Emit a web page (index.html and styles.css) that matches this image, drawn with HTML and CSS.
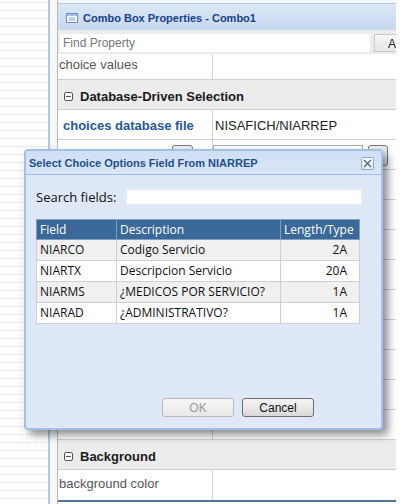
FILE: index.html
```html
<!DOCTYPE html>
<html>
<head>
<meta charset="utf-8">
<link rel="stylesheet" href="styles.css">
</head>
<body>
<div class="page">
  <div class="grid"></div>
  <div class="gutter"></div>
  <div class="panel">
    <div class="topstrip"></div>
    <div class="phead">
      <svg class="picon" width="12" height="10" viewBox="0 0 12 10">
        <rect x="0.5" y="0.5" width="11" height="9" fill="#f4f8fd" stroke="#6f8fbf"/>
        <rect x="1" y="1" width="10" height="2" fill="#a9c1e2"/>
        <line x1="3" y1="5" x2="9" y2="5" stroke="#8aa6cf"/>
        <line x1="3" y1="7" x2="9" y2="7" stroke="#8aa6cf"/>
      </svg>
      <span class="ptitle">Combo Box Properties - Combo1</span>
    </div>
    <div class="findrow">
      <div class="findinput">Find Property</div>
      <div class="findbtn">A</div>
    </div>
    <div class="row first"><div class="lab">choice values</div><div class="val"></div></div>
    <div class="sect"><span class="tog"></span>Database-Driven Selection</div>
    <div class="row"><div class="lab blue">choices database file</div><div class="val">NISAFICH/NIARREP</div></div>
    <div class="row btnrow">
      <div class="lab"><span class="minibtn"></span></div>
      <div class="val"><span class="miniinput"></span><span class="minibtn2"></span></div>
    </div>
    <div class="row"><div class="lab"></div><div class="val"></div></div>
    <div class="row"><div class="lab"></div><div class="val"></div></div>
    <div class="row"><div class="lab"></div><div class="val"></div></div>
    <div class="row"><div class="lab"></div><div class="val"></div></div>
    <div class="row"><div class="lab"></div><div class="val"></div></div>
    <div class="row"><div class="lab"></div><div class="val"></div></div>
    <div class="row"><div class="lab"></div><div class="val"></div></div>
    <div class="row"><div class="lab"></div><div class="val"></div></div>
    <div class="row"><div class="lab"></div><div class="val"></div></div>
    <div class="sect"><span class="tog"></span>Background</div>
    <div class="row last"><div class="lab">background color</div><div class="val"></div></div>
  </div>
  <div class="rest"></div>
</div>

<div class="dialog">
  <div class="dhead">
    <span class="dtitle">Select Choice Options Field From NIARREP</span>
    <span class="dclose">
      <svg width="11" height="11" viewBox="0 0 11 11"><path d="M2 2 L9 9 M9 2 L2 9" stroke="#4d6487" stroke-width="1.3" fill="none"/></svg>
    </span>
  </div>
  <div class="dbody">
    <div class="search">
      <span class="slabel">Search fields:</span>
      <span class="sinput"></span>
    </div>
    <table class="tbl">
      <thead>
        <tr><th class="c1">Field</th><th class="c2">Description</th><th class="c3">Length/Type</th></tr>
      </thead>
      <tbody>
        <tr class="odd"><td>NIARCO</td><td>Codigo Servicio</td><td class="num">2A</td></tr>
        <tr><td>NIARTX</td><td>Descripcion Servicio</td><td class="num">20A</td></tr>
        <tr class="odd"><td>NIARMS</td><td>¿MEDICOS POR SERVICIO?</td><td class="num">1A</td></tr>
        <tr><td>NIARAD</td><td>¿ADMINISTRATIVO?</td><td class="num">1A</td></tr>
      </tbody>
    </table>
    <div class="spacer"></div>
    <div class="dfoot">
      <span class="btn ok">OK</span>
      <span class="btn cancel">Cancel</span>
    </div>
  </div>
</div>
</body>
</html>
```

FILE: styles.css
```css
html, body {
  margin: 0;
  padding: 0;
  background: #fff;
}
body {
  width: 417px;
  height: 504px;
  overflow: hidden;
  position: relative;
  font-family: "Liberation Sans", Arial, sans-serif;
}
.page {
  display: flex;
  height: 504px;
}
.grid {
  width: 48px;
  flex: none;
  background-color: #fff;
  background-image:
    repeating-linear-gradient(0deg, #fff 0 1px, transparent 1px 2px),
    repeating-linear-gradient(90deg, #fff 0 1px, transparent 1px 2px),
    repeating-linear-gradient(90deg, #dedede 0 1px, transparent 1px 8px),
    repeating-linear-gradient(0deg, #dedede 0 1px, transparent 1px 8px);
  background-position: 0 0, 0 0, 4px 3px, 4px 3px;
}
.gutter {
  width: 7px;
  flex: none;
  border-left: 2px solid #b4c8e3;
  background: #f6f7f9;
}
.panel {
  width: 339px;
  flex: none;
  display: flex;
  flex-direction: column;
  border-left: 1px solid #b9b9b9;
  box-sizing: border-box;
  background: #fff;
}
.rest {
  flex: 1;
  background: #fff;
}
.topstrip {
  height: 3px;
  background: #f3f6fb;
  border-bottom: 1px solid #b5c8e3;
}
.phead {
  height: 26px;
  box-sizing: border-box;
  background: linear-gradient(#dde8f6, #c6d7ef);
  display: flex;
  align-items: center;
  padding-left: 8px;
  gap: 5px;
  padding-top: 2px;
}
.ptitle {
  font-weight: bold;
  font-size: 11px;
  color: #15428b;
}
.findrow {
  height: 24px;
  box-sizing: border-box;
  background: #ececec;
  display: flex;
  align-items: flex-start;
  padding: 4px 0 0 2px;
  gap: 4px;
}
.findinput {
  width: 310px;
  height: 18px;
  box-sizing: border-box;
  background: #fff;
  font-size: 12px;
  color: #777;
  padding: 2px 0 0 3px;
}
.findbtn {
  flex: 1;
  height: 18px;
  box-sizing: border-box;
  border: 1px solid #c9c9c9;
  border-right: none;
  background: linear-gradient(#f7f7f7, #e6e6e6);
  font-size: 12px;
  padding: 2px 0 0 13px;
  color: #222;
}
.row {
  height: 30px;
  box-sizing: border-box;
  border-bottom: 1px solid #d0d0d0;
  display: flex;
}
.row.first {
  height: 26px;
}
.row.last {
  height: 32px;
  border-bottom: 2px solid #52749c;
}
.lab {
  width: 155px;
  flex: none;
  border-right: 1px solid #d3d3d3;
  font-size: 13px;
  color: #555;
  padding: 3px 0 0 1px;
  box-sizing: border-box;
  position: relative;
}
.row.first .lab {
  padding-top: 3px;
}
.lab.blue {
  color: #24589a;
  font-weight: bold;
  padding-left: 5px;
  padding-top: 8px;
}
.val {
  flex: 1;
  font-size: 13px;
  color: #222;
  padding: 8px 0 0 2px;
  position: relative;
}
.row.last .lab {
  padding-top: 6px;
}
.sect {
  height: 30px;
  box-sizing: border-box;
  background: #ececec;
  border-bottom: 1px solid #d0d0d0;
  display: flex;
  align-items: center;
  padding: 4px 0 0 6px;
  font-size: 13px;
  font-weight: bold;
  color: #1a1a1a;
  gap: 7px;
}
.tog {
  width: 9px;
  height: 9px;
  box-sizing: border-box;
  border: 1px solid #555;
  border-radius: 2px;
  background: linear-gradient(#555, #555) center / 5px 1px no-repeat, #fff;
}
.btnrow .lab, .btnrow .val {
  padding: 5px 0 0 0;
  display: flex;
}
.minibtn {
  margin-left: 114px;
  width: 21px;
  height: 24px;
  box-sizing: border-box;
  border: 1px solid #777;
  border-radius: 3px;
  background: #eee;
}
.miniinput {
  width: 150px;
  height: 20px;
  box-sizing: border-box;
  border: 1px solid #aaa;
  background: #fff;
}
.minibtn2 {
  margin-left: 5px;
  width: 20px;
  height: 21px;
  box-sizing: border-box;
  border: 1px solid #777;
  border-radius: 3px;
  background: #eee;
}

/* dialog */
.dialog {
  position: absolute;
  left: 24px;
  top: 149px;
  width: 359px;
  height: 281px;
  box-sizing: border-box;
  border: 2px solid #a3c0e8;
  border-radius: 4px;
  background: #dfe8f6;
  box-shadow: 5px 5px 8px rgba(0, 0, 0, 0.45);
  display: flex;
  flex-direction: column;
}
.dhead {
  height: 24px;
  box-sizing: border-box;
  background: linear-gradient(#cfdff4, #dbe6f6);
  border-bottom: 1px solid #9fbde6;
  display: flex;
  align-items: center;
  justify-content: space-between;
  padding: 1px 7px 0 3px;
}
.dtitle {
  font-weight: bold;
  font-size: 11px;
  color: #1d4e8f;
}
.dclose {
  width: 13px;
  height: 13px;
  box-sizing: border-box;
  border: 1px solid #87a9d8;
  border-radius: 2px;
  background: linear-gradient(#fbfdff, #e2ecf8);
  display: flex;
  align-items: center;
  justify-content: center;
}
.dbody {
  flex: 1;
  display: flex;
  flex-direction: column;
  padding: 13px 0 0 10px;
  font-family: "Open Sans", "Noto Sans", sans-serif;
}
.search {
  display: flex;
  align-items: center;
  height: 17px;
}
.slabel {
  width: 90px;
  font-size: 13px;
  color: #111;
}
.sinput {
  width: 236px;
  height: 16px;
  background: #fff;
  border: 1px solid #e8eef7;
  box-sizing: border-box;
}
.tbl {
  margin-top: 14px;
  border-collapse: collapse;
  width: 324px;
  font-size: 12px;
  color: #111;
}
.tbl th {
  background: #3a6899;
  color: #fff;
  font-weight: normal;
  text-align: left;
  height: 19px;
  padding: 0 0 0 3px;
  border: 1px solid #7f9fc3;
  line-height: 17px;
}
.tbl th.c1 { width: 76px; }
.tbl th.c2 { width: 160px; }
.tbl td {
  height: 20px;
  padding: 0 0 0 3px;
  border: 1px solid #cfcfcf;
  background: #fff;
  line-height: 18px;
}
.tbl tr.odd td {
  background: #f0f0f0;
}
.tbl td.num {
  text-align: right;
  padding-right: 12px;
}
.spacer {
  flex: 1;
}
.dfoot {
  display: flex;
  justify-content: flex-end;
  gap: 8px;
  padding: 0 67px 11px 0;
}
.btn {
  width: 72px;
  height: 19px;
  box-sizing: border-box;
  border-radius: 3px;
  font-family: "Liberation Sans", Arial, sans-serif;
  font-size: 12px;
  display: flex;
  align-items: center;
  justify-content: center;
}
.ok {
  border: 1px solid #b9b9b9;
  background: linear-gradient(#f7f7f7, #e8e8e8);
  color: #9a9a9a;
}
.cancel {
  border: 1px solid #6f6f6f;
  background: linear-gradient(#f4f4f4 0%, #e9e9e9 50%, #d9d9d9 100%);
  color: #111;
}
```
